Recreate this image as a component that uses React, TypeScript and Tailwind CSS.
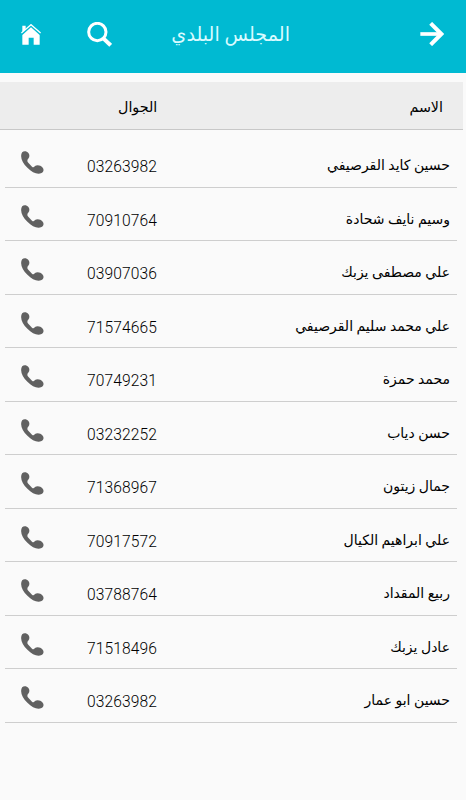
type Member = { name: string; phone: string };

const members: Member[] = [
  { name: "حسين كايد القرصيفي", phone: "03263982" },
  { name: "وسيم نايف شحادة", phone: "70910764" },
  { name: "علي مصطفى يزبك", phone: "03907036" },
  { name: "علي محمد سليم القرصيفي", phone: "71574665" },
  { name: "محمد حمزة", phone: "70749231" },
  { name: "حسن دياب", phone: "03232252" },
  { name: "جمال زيتون", phone: "71368967" },
  { name: "علي ابراهيم الكيال", phone: "70917572" },
  { name: "ربيع المقداد", phone: "03788764" },
  { name: "عادل يزبك", phone: "71518496" },
  { name: "حسين ابو عمار", phone: "03263982" },
];

function HomeIcon() {
  return (
    <svg viewBox="0 0 60 63" className="h-[21px] w-5" fill="currentColor">
      <path d="M4 5h10v11L4 24z" />
      <path d="M1 27 30 2l29 25" fill="none" stroke="currentColor" strokeWidth="4" />
      <path d="M4 33 30 10l26 23v29H38V41H23v21H4z" />
    </svg>
  );
}

function SearchIcon() {
  return (
    <svg viewBox="0 0 75 75" className="size-[25px]" fill="none" stroke="currentColor">
      <circle cx="31" cy="30" r="26" strokeWidth="9" />
      <path d="M49 49 71 70" strokeWidth="12" />
    </svg>
  );
}

function ForwardIcon() {
  return (
    <svg viewBox="0 0 72 72" className="mb-1 size-6" fill="none" stroke="currentColor">
      <path d="M1 36h62" strokeWidth="11" />
      <path d="M32 4 64 36 32 68" strokeWidth="12" />
    </svg>
  );
}

function PhoneIcon() {
  return (
    <svg viewBox="0 0 69 70" className="h-[23px] w-[23px]" fill="currentColor">
      <path d="M3 4C8-1 17 0 22 6c4 5 4 11 0 17-4 4-4 8-1 12l12 13c3 3 6 2 9-2 6-5 17-3 23 4 5 6 4 13-3 17-12 6-28-1-43-16C3 36-5 16 3 4z" />
    </svg>
  );
}

function MemberRow({ name, phone }: Member) {
  return (
    <li className="flex h-[53.55px] items-start border-b border-[#cecece] pt-[17px]">
      <span className="mt-[4px] mr-[7px] flex-1 text-[14px] leading-5 text-black">{name}</span>
      <span className="mt-[6px] text-[15.6px] leading-5 font-light tracking-[0.1px] text-black">{phone}</span>
      <button aria-label="اتصال" className="mr-[43px] ml-[16px] text-[#616161]">
        <PhoneIcon />
      </button>
    </li>
  );
}

export default function App() {
  return (
    <div
      dir="rtl"
      className="h-[800px] w-[466px] overflow-hidden bg-[#fafafa] font-['Roboto','DejaVu_Sans',sans-serif]"
    >
      <header className="flex h-[72.5px] items-center bg-[#00bad2] pr-[22px] pl-[21px] text-white">
        <ForwardIcon />
        <h1 className="mt-[-1px] mr-[130px] flex-1 text-[19.2px] text-[#d8fbff]">المجلس البلدي</h1>
        <div className="flex flex-row-reverse items-center gap-[46px] pb-[3px]">
          <HomeIcon />
          <SearchIcon />
        </div>
      </header>

      <div className="mt-[9.5px] mr-[3px] flex h-[48px] items-center border-b border-[#c8c8c8] bg-[#ededed] pt-[4px] text-[14.3px] text-black">
        <span className="mr-[20px] flex-1">الاسم</span>
        <span className="ml-[118px]">الجوال</span>
      </div>

      <ul className="mt-[4px] mr-[9px] ml-[5px]">
        {members.map((member, i) => (
          <MemberRow key={i} {...member} />
        ))}
      </ul>
    </div>
  );
}
